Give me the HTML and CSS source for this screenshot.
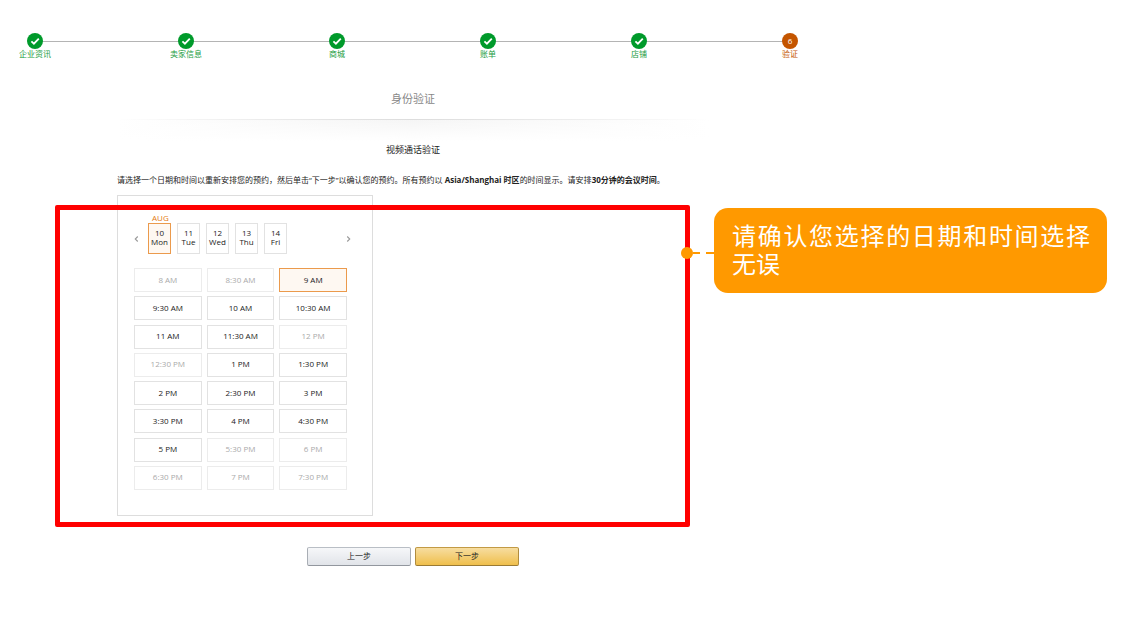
FILE: index.html
```
<!DOCTYPE html>
<html lang="zh-CN">
<head>
<meta charset="utf-8">
<meta name="viewport" content="width=device-width, initial-scale=1">
<title>身份验证</title>
<link rel="stylesheet" href="styles.css">
</head>
<body>
<main class="page">
  <ol class="steps">
    <li class="step"><span class="dot"><svg viewBox="0 0 16 16" aria-hidden="true"><path d="M4.4 8.4l2.5 2.3 4.9-5"/></svg></span>企业资讯</li>
    <li class="step"><span class="dot"><svg viewBox="0 0 16 16" aria-hidden="true"><path d="M4.4 8.4l2.5 2.3 4.9-5"/></svg></span>卖家信息</li>
    <li class="step"><span class="dot"><svg viewBox="0 0 16 16" aria-hidden="true"><path d="M4.4 8.4l2.5 2.3 4.9-5"/></svg></span>商城</li>
    <li class="step"><span class="dot"><svg viewBox="0 0 16 16" aria-hidden="true"><path d="M4.4 8.4l2.5 2.3 4.9-5"/></svg></span>账单</li>
    <li class="step"><span class="dot"><svg viewBox="0 0 16 16" aria-hidden="true"><path d="M4.4 8.4l2.5 2.3 4.9-5"/></svg></span>店铺</li>
    <li class="step current" aria-current="step"><span class="dot">6</span>验证</li>
  </ol>

  <header class="heading">
    <h1>身份验证</h1>
    <div class="divider"></div>
    <h2>视频通话验证</h2>
    <p class="intro">请选择一个日期和时间以重新安排您的预约，然后单击“下一步”以确认您的预约。所有预约以 <b>Asia/Shanghai 时区</b>的时间显示。请安排<b>30分钟的会议时间</b>。</p>
  </header>

  <section class="schedule">
    <div class="card">
      <div class="month">AUG</div>
      <div class="week">
        <button class="arrow" type="button" aria-label="上一周"><svg viewBox="0 0 6 8" aria-hidden="true"><path d="M4.5 1L1.5 4l3 3"/></svg></button>
        <div class="days">
          <button class="day selected" type="button"><span>10</span><span>Mon</span></button>
          <button class="day" type="button"><span>11</span><span>Tue</span></button>
          <button class="day" type="button"><span>12</span><span>Wed</span></button>
          <button class="day" type="button"><span>13</span><span>Thu</span></button>
          <button class="day" type="button"><span>14</span><span>Fri</span></button>
        </div>
        <button class="arrow next" type="button" aria-label="下一周"><svg viewBox="0 0 6 8" aria-hidden="true"><path d="M1.5 1l3 3-3 3"/></svg></button>
      </div>
      <div class="slots">
        <button class="slot" type="button" disabled>8 AM</button>
        <button class="slot" type="button" disabled>8:30 AM</button>
        <button class="slot selected" type="button">9 AM</button>
        <button class="slot" type="button">9:30 AM</button>
        <button class="slot" type="button">10 AM</button>
        <button class="slot" type="button">10:30 AM</button>
        <button class="slot" type="button">11 AM</button>
        <button class="slot" type="button">11:30 AM</button>
        <button class="slot" type="button" disabled>12 PM</button>
        <button class="slot" type="button" disabled>12:30 PM</button>
        <button class="slot" type="button">1 PM</button>
        <button class="slot" type="button">1:30 PM</button>
        <button class="slot" type="button">2 PM</button>
        <button class="slot" type="button">2:30 PM</button>
        <button class="slot" type="button">3 PM</button>
        <button class="slot" type="button">3:30 PM</button>
        <button class="slot" type="button">4 PM</button>
        <button class="slot" type="button">4:30 PM</button>
        <button class="slot" type="button">5 PM</button>
        <button class="slot" type="button" disabled>5:30 PM</button>
        <button class="slot" type="button" disabled>6 PM</button>
        <button class="slot" type="button" disabled>6:30 PM</button>
        <button class="slot" type="button" disabled>7 PM</button>
        <button class="slot" type="button" disabled>7:30 PM</button>
      </div>
    </div>
    <div class="highlight"></div>
    <svg class="connector" viewBox="0 0 33 12" aria-hidden="true"><circle cx="6" cy="6" r="6"/><path d="M12 6h7M25 6h8"/></svg>
    <aside class="callout">请确认您选择的日期和时间选择无误</aside>
  </section>

  <div class="actions">
    <button class="btn" type="button">上一步</button>
    <button class="btn primary" type="button">下一步</button>
  </div>
</main>
</body>
</html>
```
FILE: styles.css
```
* {
  box-sizing: border-box;
}

body {
  margin: 0;
  background: #fff;
  color: #222;
  font-family: "Open Sans", "Noto Sans CJK SC", sans-serif;
  font-size: 8px;
  line-height: 12px;
}

button {
  padding: 0;
  font: inherit;
  color: inherit;
  background: #fff;
  cursor: pointer;
}

h1, h2, p, ol {
  margin: 0;
  padding: 0;
  font-weight: 400;
}

.page {
  max-width: 826px;
  padding-top: 33px;
}

/* progress */
.steps {
  position: relative;
  display: flex;
  justify-content: space-between;
  margin: 0 19px 0 18px;
  list-style: none;
  line-height: 10px;
}

.steps::before {
  content: "";
  position: absolute;
  top: 8px;
  left: 17px;
  right: 17px;
  height: 1px;
  background: #b4b4b4;
}

.step {
  position: relative;
  display: flex;
  flex-direction: column;
  align-items: center;
  width: 34px;
  color: #1a9c42;
  white-space: nowrap;
}

.dot {
  display: flex;
  align-items: center;
  justify-content: center;
  width: 16px;
  height: 16px;
  border-radius: 50%;
  background: #009a2b;
  color: #fff;
}

.dot svg {
  width: 16px;
  height: 16px;
  fill: none;
  stroke: #fff;
  stroke-width: 1.8;
}

.current {
  color: #c45500;
}

.current .dot {
  background: #c45500;
}

/* titles */
.heading {
  padding: 32px 117px 0;
  text-align: center;
}

h1 {
  color: #888;
  font-size: 11px;
  line-height: 16px;
}

.divider {
  height: 22px;
  margin-top: 12px;
  background:
    linear-gradient(90deg, transparent, #ddd 50%, transparent) top / 100% 1px no-repeat,
    linear-gradient(transparent, #fff),
    linear-gradient(90deg, #fff, #f5f5f5 50%, #fff);
}

h2 {
  margin-top: 2px;
  font-size: 9px;
  line-height: 14px;
}

.intro {
  margin-top: 17px;
  text-align: left;
  white-space: nowrap;
}

/* scheduler */
.schedule {
  position: relative;
  margin-top: 9px;
  padding: 0 117px;
}

.card {
  width: 256px;
  padding: 16px 25px 25px 16px;
  border: 1px solid #ddd;
}

.month {
  padding-left: 18px;
  color: #e47911;
  line-height: 11px;
}

.week {
  display: flex;
  align-items: center;
}

.days {
  display: flex;
  flex: 1;
  gap: 6px;
  margin-left: 9px;
}

.arrow {
  display: flex;
  border: 0;
}

.arrow svg {
  width: 5px;
  height: 8px;
  fill: none;
  stroke: #999;
  stroke-width: 1.3;
}

.next {
  margin-right: -4px;
}

.day {
  display: flex;
  flex-direction: column;
  align-items: center;
  justify-content: center;
  width: 23px;
  height: 31px;
  padding-bottom: 3px;
  border: 1px solid #e2e2e2;
  line-height: 9px;
}

.slots {
  display: grid;
  grid-template-columns: repeat(3, 1fr);
  gap: 4px 5px;
  align-content: space-between;
  min-height: 222px;
  margin-top: 14px;
}

.slot {
  height: 24px;
  padding-bottom: 1px;
  border: 1px solid #e2e2e2;
  font-weight: 500;
}

.slot:disabled {
  border-color: #ececec;
  color: #aaa;
  cursor: default;
}

.day.selected,
.slot.selected {
  border-color: #eb9a4c;
  background: #fef8f2;
}

/* annotation */
.highlight {
  position: absolute;
  inset: 10px 136px -11px 55px;
  border: 5px solid #f00;
  border-radius: 2px;
  pointer-events: none;
}

.connector {
  position: absolute;
  top: 52px;
  left: 681px;
  width: 33px;
  height: 12px;
  fill: #f90;
  stroke: #f90;
  stroke-width: 2;
}

.connector circle {
  stroke: none;
}

.callout {
  position: absolute;
  top: 13px;
  left: 714px;
  width: 393px;
  padding: 13px 17px 16px 18px;
  border-radius: 14px;
  background: #f90;
  color: #fff;
  font-family: "Noto Sans CJK SC", sans-serif;
  font-size: 24px;
  line-height: 28px;
  text-align: justify;
}

/* footer */
.actions {
  display: flex;
  justify-content: center;
  gap: 4px;
  margin-top: 31px;
}

.btn {
  width: 104px;
  height: 19px;
  padding-bottom: 2px;
  border: 1px solid;
  border-color: #b9bec5 #a9aeb5 #92979e;
  border-radius: 2px;
  background: linear-gradient(#f6f7f9, #e1e4e9);
}

.btn.primary {
  border-color: #c29a45 #b08c3e #9a7a34;
  background: linear-gradient(#f7dda0, #efbf4c);
}
```
